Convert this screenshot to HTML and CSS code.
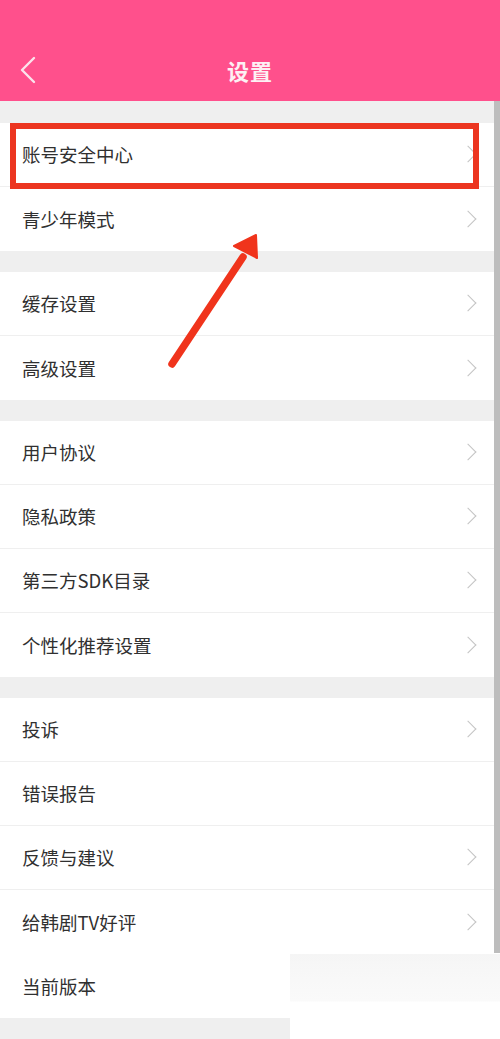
FILE: index.html
```html
<!DOCTYPE html>
<html lang="zh">
<head>
<meta charset="utf-8">
<title>设置</title>
<link rel="stylesheet" href="styles.css">
</head>
<body>
<div class="page">
  <header class="topbar">
    <svg class="back" width="18" height="28" viewBox="0 0 18 28"><path d="M15 2 L3 14 L15 26" fill="none" stroke="#fbe3ec" stroke-width="2.4" stroke-linecap="round" stroke-linejoin="round"/></svg>
    <h1 class="title">设置</h1>
  </header>
  <div class="gap first"></div>
  <section class="group">
    <div class="row"><span>账号安全中心</span><i class="chev"></i></div>
    <div class="row"><span>青少年模式</span><i class="chev"></i></div>
  </section>
  <div class="gap"></div>
  <section class="group">
    <div class="row"><span>缓存设置</span><i class="chev"></i></div>
    <div class="row"><span>高级设置</span><i class="chev"></i></div>
  </section>
  <div class="gap"></div>
  <section class="group">
    <div class="row"><span>用户协议</span><i class="chev"></i></div>
    <div class="row"><span>隐私政策</span><i class="chev"></i></div>
    <div class="row"><span>第三方SDK目录</span><i class="chev"></i></div>
    <div class="row"><span>个性化推荐设置</span><i class="chev"></i></div>
  </section>
  <div class="gap"></div>
  <section class="group">
    <div class="row"><span>投诉</span><i class="chev"></i></div>
    <div class="row"><span>错误报告</span></div>
    <div class="row"><span>反馈与建议</span><i class="chev"></i></div>
    <div class="row last"><span>给韩剧TV好评</span><i class="chev"></i></div>
  </section>
  <div class="tail">
    <div class="tail-left">
      <div class="row version"><span>当前版本</span></div>
      <div class="gap"></div>
    </div>
    <div class="tail-right"></div>
  </div>

  <div class="scrollbar"></div>
  <div class="highlight"></div>
  <svg class="arrow" width="500" height="1039" viewBox="0 0 500 1039">
    <line x1="172" y1="364" x2="243" y2="257" stroke="#f0341c" stroke-width="7.5" stroke-linecap="round"/>
    <polygon points="256,235 234,246 257,258" fill="#f0341c" stroke="#f0341c" stroke-width="2" stroke-linejoin="round"/>
  </svg>
</div>
</body>
</html>
```

FILE: styles.css
```css
* { box-sizing: border-box; }
html, body { margin: 0; padding: 0; background: #ffffff; }
body {
  font-family: "Noto Sans CJK SC", "Noto Sans", sans-serif;
  width: 500px;
  height: 1039px;
  overflow: hidden;
}
.page {
  position: relative;
  width: 500px;
  height: 1039px;
  display: flex;
  flex-direction: column;
}
.topbar {
  height: 101px;
  background: #ff508c;
  display: flex;
  align-items: flex-end;
  justify-content: center;
  padding-bottom: 15px;
  position: relative;
  flex-shrink: 0;
}
.back {
  position: absolute;
  left: 19px;
  top: 56px;
}
.title {
  margin: 0;
  color: #fdf0f4;
  font-size: 22px;
  font-weight: 700;
  line-height: 32px;
  letter-spacing: 1px;
}
.gap {
  height: 21px;
  background: #efefef;
  flex-shrink: 0;
}
.gap.first { height: 22px; }
.group {
  background: #fff;
  display: flex;
  flex-direction: column;
}
.row {
  height: 64px;
  display: flex;
  align-items: center;
  justify-content: space-between;
  padding: 0 22px 1px 22px;
  border-bottom: 1px solid #efefef;
  color: #303030;
  font-size: 18.5px;
  flex-shrink: 0;
}
.group .row:last-child { border-bottom: none; }
.chev {
  width: 12px;
  height: 12px;
  border-top: 1.6px solid #c4c4c4;
  border-right: 1.6px solid #c4c4c4;
  transform: rotate(45deg);
  margin-right: 4px;
}
.tail {
  display: flex;
  flex: 1;
}
.tail-left {
  width: 290px;
  display: flex;
  flex-direction: column;
}
.tail-left .gap { flex: 1; }
.row.version { border-bottom: none; height: 64px; }
.tail-right {
  flex: 1;
  background: linear-gradient(#f5f5f5 0, #f7f7f7 16px, #fafafa 47px, #ffffff 48px);
}
.scrollbar {
  position: absolute;
  right: 0;
  top: 101px;
  width: 6px;
  height: 852px;
  background: #bdbdbd;
}
.highlight {
  position: absolute;
  left: 10px;
  top: 123px;
  width: 469px;
  height: 66px;
  border: 6.5px solid #ec3520;
}
.arrow {
  position: absolute;
  left: 0;
  top: 0;
  pointer-events: none;
}
```
